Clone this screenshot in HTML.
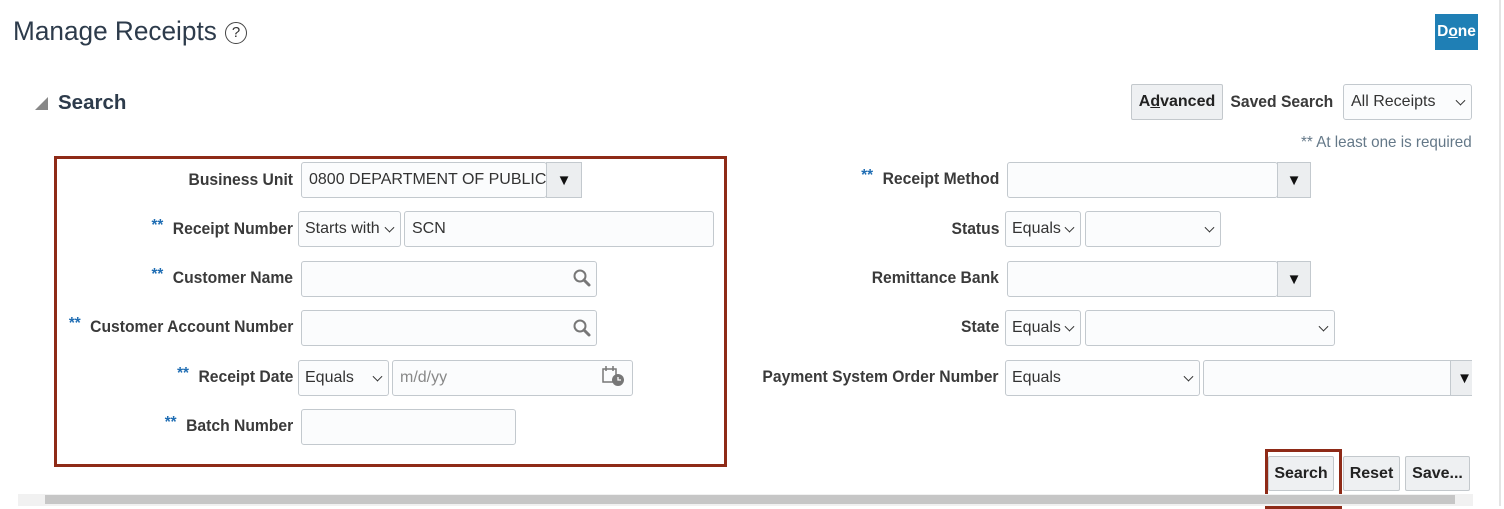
<!DOCTYPE html>
<html><head><meta charset="utf-8"><style>
*{box-sizing:border-box;margin:0;padding:0}
body{width:1504px;height:506px;background:#fff;position:relative;overflow:hidden;font-family:"Liberation Sans",Arial,sans-serif;color:#333}
.a{position:absolute}
.lbl{position:absolute;font-weight:bold;font-size:16.5px;color:#3a3a3a;text-align:right;white-space:nowrap;transform:scaleX(.95);transform-origin:right center;height:36px;line-height:36px}
.st{color:#1f6db3;font-weight:bold;margin-right:10px;font-size:16px;position:relative;top:-4px}
.in{position:absolute;background:#fbfcfd;border:1px solid #c3c9ce;border-radius:3px;font-size:16px;color:#333;padding-left:7px;display:flex;align-items:center;white-space:nowrap;overflow:hidden}
.dd{position:absolute;background:#eceef0;border:1px solid #c3c9ce;display:flex;align-items:center;justify-content:center;font-size:15px;color:#111}
.chev{position:absolute;right:7px;top:50%;width:7px;height:7px;border-right:1.5px solid #333;border-bottom:1.5px solid #333;transform:translateY(-70%) rotate(45deg)}
.btn{position:absolute;background:#eef0f2;border:1px solid #c3c8cc;border-radius:2px;font-weight:bold;font-size:16px;color:#222;display:flex;align-items:center;justify-content:center}
</style></head><body>
<div class="a" style="left:13px;top:16px;font-size:27px;color:#2d3b4b;transform:scaleX(.97);transform-origin:left">Manage Receipts</div>
<div class="a" style="left:225px;top:22px;width:22px;height:22px;border:1.5px solid #444;border-radius:50%;font-size:15px;text-align:center;line-height:19px;color:#333">?</div>
<div class="a" style="left:1435px;top:14px;width:43px;height:36px;background:#1f7fb5;color:#fff;font-weight:bold;font-size:15.5px;display:flex;align-items:center;justify-content:center">D<u>o</u>ne</div>

<div class="a" style="left:35px;top:97px;width:0;height:0;border-left:13px solid transparent;border-bottom:13px solid #888"></div>
<div class="a" style="left:58px;top:91px;font-size:20.5px;font-weight:bold;color:#2d3b4b">Search</div>

<div class="btn" style="left:1131px;top:84px;width:92px;height:36px">A<u>d</u>vanced</div>
<div class="lbl" style="right:171px;top:84px">Saved Search</div>
<div class="in" style="left:1343px;top:84px;width:129px;height:36px">All Receipts<span class="chev"></span></div>
<div class="a" style="right:32px;top:134px;font-size:16px;color:#647888;transform:scaleX(.95);transform-origin:right">** At least one is required</div>

<div class="a" style="left:54px;top:156px;width:673px;height:311px;border:3px solid #8e2a17"></div>

<div class="lbl" style="right:1211px;top:162px">Business Unit</div>
<div class="in" style="left:301px;top:162px;width:246px;height:36px">0800 DEPARTMENT OF PUBLIC</div>
<div class="dd" style="left:546px;top:162px;width:36px;height:36px">▼</div>

<div class="lbl" style="right:1211px;top:211px"><span class="st">**</span>Receipt Number</div>
<div class="in" style="left:298px;top:211px;width:103px;height:36px;padding-left:6px">Starts with<span class="chev"></span></div>
<div class="in" style="left:404px;top:211px;width:310px;height:36px">SCN</div>

<div class="lbl" style="right:1211px;top:260px"><span class="st">**</span>Customer Name</div>
<div class="in" style="left:301px;top:261px;width:296px;height:36px"></div>
<svg class="a" style="left:572px;top:268px" width="20" height="20" viewBox="0 0 20 20"><circle cx="8" cy="8" r="5.5" fill="none" stroke="#777" stroke-width="2"/><path d="M12 12l5 5" stroke="#777" stroke-width="3" stroke-linecap="round"/></svg>

<div class="lbl" style="right:1211px;top:309px"><span class="st">**</span>Customer Account Number</div>
<div class="in" style="left:301px;top:310px;width:296px;height:36px"></div>
<svg class="a" style="left:572px;top:318px" width="20" height="20" viewBox="0 0 20 20"><circle cx="8" cy="8" r="5.5" fill="none" stroke="#777" stroke-width="2"/><path d="M12 12l5 5" stroke="#777" stroke-width="3" stroke-linecap="round"/></svg>

<div class="lbl" style="right:1211px;top:359px"><span class="st">**</span>Receipt Date</div>
<div class="in" style="left:298px;top:360px;width:91px;height:36px;padding-left:6px">Equals<span class="chev"></span></div>
<div class="in" style="left:392px;top:360px;width:241px;height:36px;color:#888">m/d/yy</div>
<svg class="a" style="left:602px;top:365px" width="24" height="22" viewBox="0 0 24 22"><rect x="1" y="4" width="13" height="13" fill="none" stroke="#777" stroke-width="1.5"/><path d="M4 1v5M11 1v5" stroke="#777" stroke-width="1.5"/><circle cx="16" cy="15" r="6" fill="#777"/><path d="M16 12v3h3" stroke="#fff" stroke-width="1.3" fill="none"/></svg>

<div class="lbl" style="right:1211px;top:408px"><span class="st">**</span>Batch Number</div>
<div class="in" style="left:301px;top:409px;width:215px;height:36px"></div>

<div class="lbl" style="right:505px;top:161px"><span class="st">**</span>Receipt Method</div>
<div class="in" style="left:1007px;top:162px;width:271px;height:36px"></div>
<div class="dd" style="left:1277px;top:162px;width:34px;height:36px">▼</div>

<div class="lbl" style="right:505px;top:211px">Status</div>
<div class="in" style="left:1005px;top:211px;width:76px;height:36px;padding-left:6px">Equals<span class="chev"></span></div>
<div class="in" style="left:1085px;top:211px;width:136px;height:36px"><span class="chev"></span></div>

<div class="lbl" style="right:505px;top:260px">Remittance Bank</div>
<div class="in" style="left:1007px;top:261px;width:271px;height:36px"></div>
<div class="dd" style="left:1277px;top:261px;width:34px;height:36px">▼</div>

<div class="lbl" style="right:505px;top:309px">State</div>
<div class="in" style="left:1005px;top:310px;width:76px;height:36px;padding-left:6px">Equals<span class="chev"></span></div>
<div class="in" style="left:1085px;top:310px;width:250px;height:36px"><span class="chev"></span></div>

<div class="lbl" style="right:505px;top:359px">Payment System Order Number</div>
<div class="in" style="left:1005px;top:360px;width:195px;height:36px;padding-left:6px">Equals<span class="chev"></span></div>
<div class="in" style="left:1203px;top:360px;width:250px;height:36px"></div>
<div class="dd" style="left:1450px;top:360px;width:22px;height:36px;border-right:none;justify-content:flex-end">▼</div>

<div class="btn" style="left:1268px;top:456px;width:66px;height:35px">Search</div>
<div class="a" style="left:1265px;top:449px;width:77px;height:60px;border:3px solid #8e2a17"></div>
<div class="btn" style="left:1343px;top:456px;width:57px;height:35px">Reset</div>
<div class="btn" style="left:1405px;top:456px;width:65px;height:35px">Save...</div>

<div class="a" style="left:18px;top:494px;width:1455px;height:12px;background:#f1f1f1"></div>
<div class="a" style="left:45px;top:495px;width:1410px;height:9px;background:#c6c6c6"></div>
<div class="a" style="left:1499px;top:0;width:2px;height:506px;background:#e4e4e4"></div>
</body></html>
